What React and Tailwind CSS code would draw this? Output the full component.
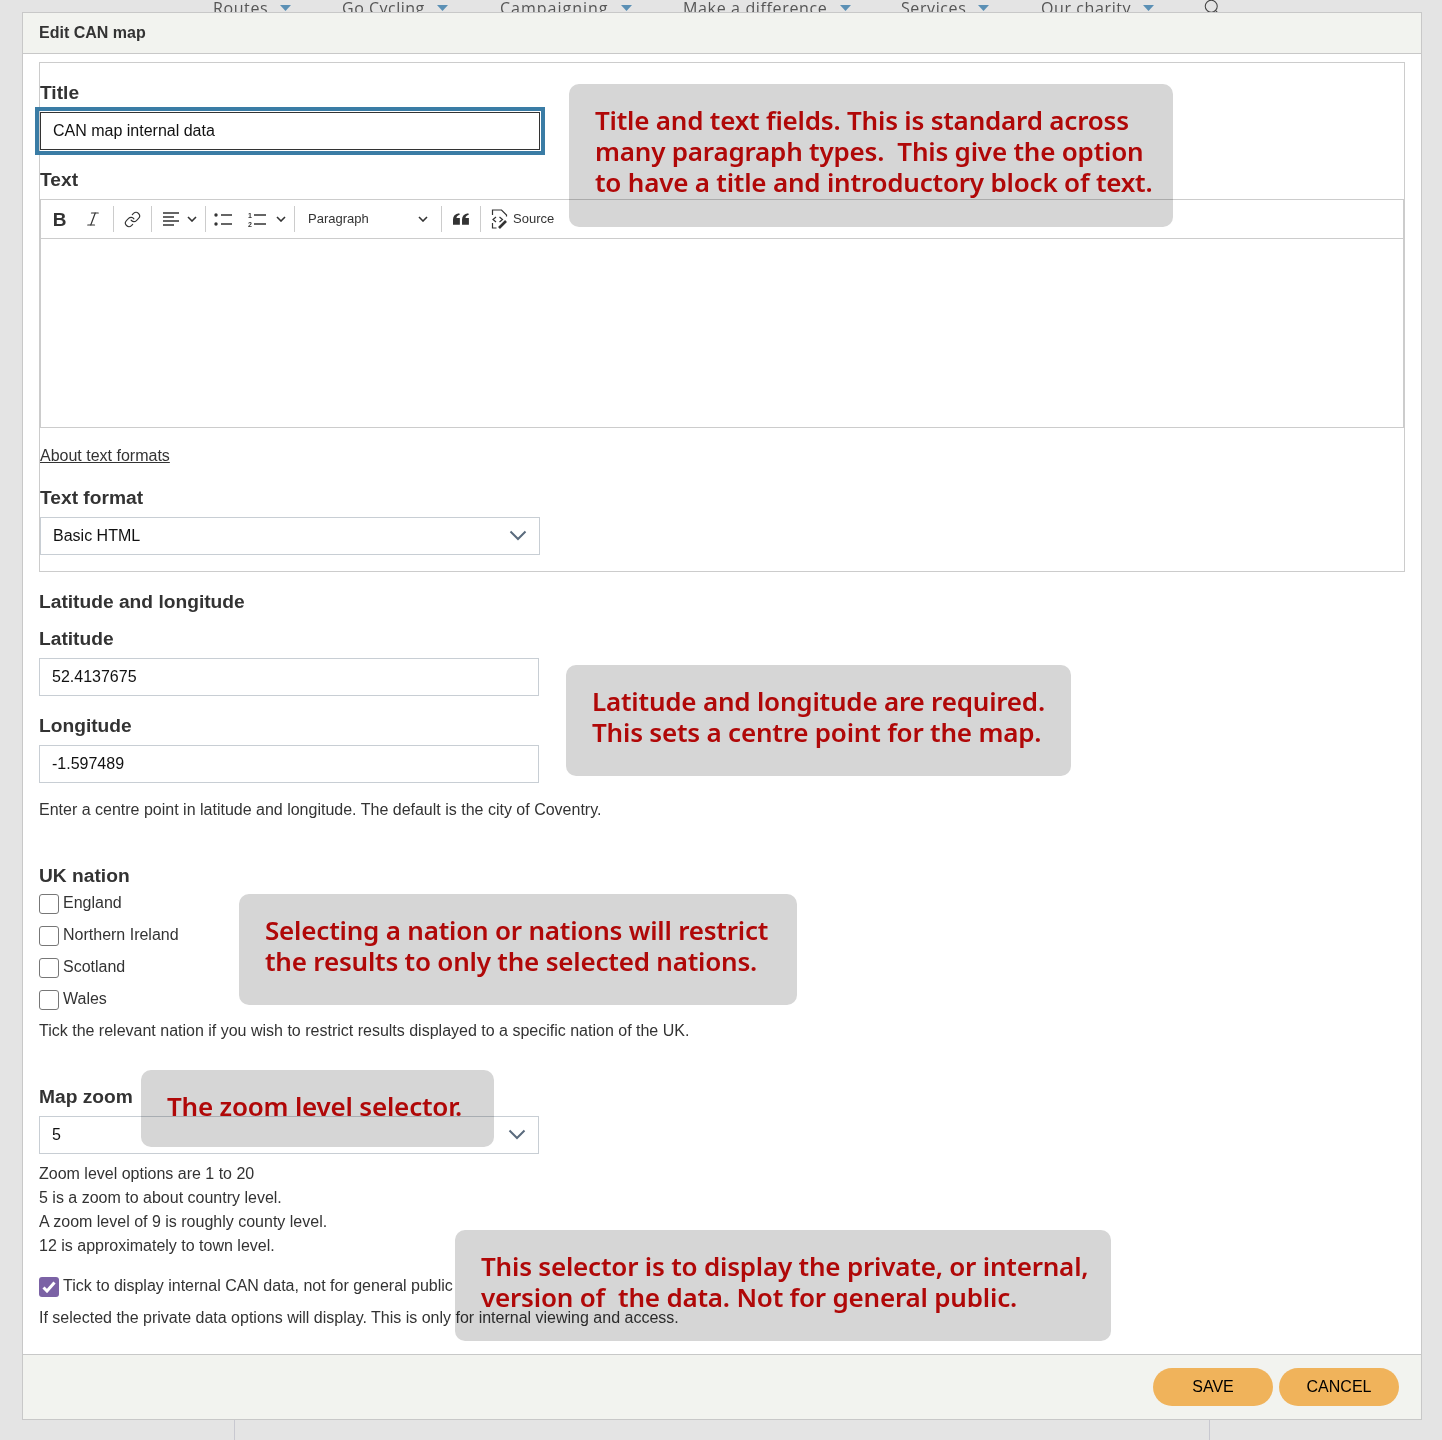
import React from "react";
import { Italic, Link, Search } from "lucide-react";

const navItems = [
  { label: "Routes", width: "w-[129px]", tracking: "tracking-[0.6px]" },
  { label: "Go Cycling", width: "w-[158px]", tracking: "tracking-[0.5px]" },
  { label: "Campaigning", width: "w-[183px]", tracking: "tracking-[1px]" },
  { label: "Make a difference", width: "w-[218px]", tracking: "tracking-[0.65px]" },
  { label: "Services", width: "w-[140px]", tracking: "tracking-[0.6px]" },
  { label: "Our charity", width: "w-[163px]", tracking: "tracking-[0.6px]" },
];

const labelClass = "block h-6 text-[19.2px] leading-[26px] font-bold text-[#333]";
const helpClass = "h-6 text-[16px] leading-[26px] text-[#333]";
const inputClass =
  "block w-[500px] h-[38px] border border-[#c8ced4] bg-white px-3 text-[16px] text-[#111] outline-none";

function Chevron() {
  return (
    <svg className="-mt-[2px]" width="18" height="11" viewBox="0 0 18 11" fill="none" stroke="#5a6b7d" strokeWidth="2">
      <path d="M1.5 1.5 9 9l7.5-7.5" />
    </svg>
  );
}

function SmallChevron() {
  return (
    <svg width="10" height="6" viewBox="0 0 10 6" fill="none" stroke="#333" strokeWidth="1.6">
      <path d="M1 1l4 4 4-4" />
    </svg>
  );
}

function Sep() {
  return <span className="w-px h-[26px] bg-[#ccc] shrink-0" />;
}

function SelectBox({ value }) {
  return (
    <div className="flex items-center justify-between w-[500px] h-[38px] border border-[#c8ced4] bg-white pl-3 pr-3 text-[16px] text-[#111]">
      <span>{value}</span>
      <Chevron />
    </div>
  );
}

function Nation({ label }) {
  return (
    <label className="flex items-start h-5 text-[16px] text-[#333]">
      <input type="checkbox" className="appearance-none w-5 h-5 rounded-[3px] border border-[#777] bg-white shrink-0" />
      <span className="ml-1 leading-[18px]">{label}</span>
    </label>
  );
}

function Toolbar() {
  return (
    <div className="flex items-center h-[39px] border-b border-[#ccc] pl-[2px] text-[#333]">
      <span className="flex justify-center w-[33px] text-[19px] font-bold leading-none text-[#333]">B</span>
      <span className="flex justify-center w-[33px]">
        <Italic size={18} strokeWidth={1.6} />
      </span>
      <span className="w-1" />
      <Sep />
      <span className="flex justify-center w-[37px]">
        <Link size={17} strokeWidth={1.6} />
      </span>
      <Sep />
      <span className="flex items-center w-[53px] pl-[11px] gap-2">
        <svg width="16" height="14" viewBox="0 0 16 14" stroke="#333" strokeWidth="1.4">
          <path d="M0 1h16M0 5h11M0 9h16M0 13h11" />
        </svg>
        <SmallChevron />
      </span>
      <Sep />
      <span className="flex justify-center w-[34px]">
        <svg width="18" height="13" viewBox="0 0 18 13" fill="#333" stroke="#333">
          <circle cx="2" cy="2" r="1.7" stroke="none" />
          <circle cx="2" cy="11" r="1.7" stroke="none" />
          <path d="M7 2h11M7 11h11" strokeWidth="1.5" />
        </svg>
      </span>
      <span className="flex items-center w-[54px] pl-2 gap-[10px]">
        <svg width="18" height="16" viewBox="0 0 18 16" fill="#333" stroke="#333">
          <text x="0" y="7" fontSize="7" fontWeight="700" stroke="none" fontFamily="Liberation Sans">1</text>
          <text x="0" y="15.5" fontSize="7" fontWeight="700" stroke="none" fontFamily="Liberation Sans">2</text>
          <path d="M6 4h12M6 13h12" strokeWidth="1.5" />
        </svg>
        <SmallChevron />
      </span>
      <Sep />
      <span className="flex items-center justify-between w-[146px] pl-[13px] pr-[13px] text-[13px]">
        Paragraph
        <SmallChevron />
      </span>
      <Sep />
      <span className="flex justify-center w-[38px]">
        <svg width="16" height="12" viewBox="0 0 17 12" fill="#333">
          <path d="M0 12V6.5C0 3 2.2.8 6.6 0l.6 1.6C5 2.3 3.900 3.300 3.700 5h3.600v7zM9.600 12V6.500c0-3.500 2.200-5.700 6.600-6.500l.6 1.600c-2.200.7-3.300 1.700-3.500 3.400h3.600v7z" />
        </svg>
      </span>
      <Sep />
      <span className="flex items-center pl-[10px] gap-1 text-[13px]">
        <svg width="18" height="20" viewBox="0 0 18 20" fill="none" stroke="#333" strokeWidth="1.2">
          <path d="M1.500 6V1h9l5 5v1.500M1.500 14v5h4" />
          <path d="M5 8 2 10.500l3 2.500M8.500 8l3 2.500-3 2.500" />
          <path d="M8 19l7-7" strokeWidth="2.600" />
        </svg>
        Source
      </span>
    </div>
  );
}

function Note({ className, children }) {
  return (
    <div
      className={`absolute rounded-[10px] bg-[#d6d6d6] mix-blend-multiply pt-[21px] pl-[26px] text-[26px] tracking-[-0.2px] leading-[31px] font-semibold text-[#b00808] whitespace-pre ${className}`}
      style={{ fontFamily: '"Noto Sans", sans-serif' }}
    >
      {children}
    </div>
  );
}

export default function App() {
  return (
    <div
      className="relative h-[1440px] overflow-hidden bg-[#e4e4e4]"
      style={{ fontFamily: '"Liberation Sans", Arial, sans-serif' }}
    >
      {/* page nav behind the dialog, clipped by it */}
      <div className="flex h-3 overflow-hidden pl-[213px]">
        {navItems.map((item) => (
          <div key={item.label} className={`flex items-center h-[22px] -mt-[3px] shrink-0 ${item.width}`}>
            <span className={`text-[16px] text-[#555] ${item.tracking}`} style={{ fontFamily: '"Open Sans", sans-serif' }}>
              {item.label}
            </span>
            <svg className="ml-3" width="11" height="6" viewBox="0 0 11 6" fill="#5b90b5">
              <path d="M0 0h11L5.500 6z" />
            </svg>
          </div>
        ))}
        <Search className="-mt-[2px] -ml-px" size={18} strokeWidth={1.4} color="#444" />
      </div>

      {/* dialog */}
      <div className="flex flex-col ml-[22px] w-[1400px] h-[1408px] border border-[#c8c8c8] bg-white">
        <div className="flex items-center h-[41px] shrink-0 border-b border-[#c8c8c8] bg-[#f2f3ef] pl-4 text-[16px] font-bold text-[#333]">
          Edit CAN map
        </div>

        <div className="flex-1 px-4 pt-2">
          <div className="border border-[#ccc] pt-[17px] pb-4">
            <span className={labelClass}>Title</span>
            <input
              defaultValue="CAN map internal data"
              className="block mt-2 w-[500px] h-[38px] border border-[#333] bg-white px-3 text-[16px] text-[#111] outline-4 outline-offset-1 outline-solid outline-[#3a7ca5]"
            />
            <span className={`${labelClass} mt-[17px]`}>Text</span>
            <div className="mt-2 h-[229px] border border-[#ccc]">
              <Toolbar />
            </div>
            <div className="mt-[15px] h-6 text-[16px] leading-[26px] text-[#333] underline">About text formats</div>
            <span className={`${labelClass} mt-[18px]`}>Text format</span>
            <div className="mt-2">
              <SelectBox value="Basic HTML" />
            </div>
          </div>

          <div className={`${labelClass} mt-[17px]`}>Latitude and longitude</div>
          <span className={`${labelClass} mt-[13px]`}>Latitude</span>
          <input defaultValue="52.4137675" className={`${inputClass} mt-2`} />
          <span className={`${labelClass} mt-[17px]`}>Longitude</span>
          <input defaultValue="-1.597489" className={`${inputClass} mt-2`} />
          <div className={`${helpClass} mt-[14px]`}>
            Enter a centre point in latitude and longitude. The default is the city of Coventry.
          </div>

          <div className={`${labelClass} mt-[42px]`}>UK nation</div>
          <div className="flex flex-col gap-3 mt-[7px]">
            <Nation label="England" />
            <Nation label="Northern Ireland" />
            <Nation label="Scotland" />
            <Nation label="Wales" />
          </div>
          <div className={`${helpClass} mt-2`}>
            Tick the relevant nation if you wish to restrict results displayed to a specific nation of the UK.
          </div>

          <div className={`${labelClass} mt-[42px]`}>Map zoom</div>
          <div className="mt-2">
            <SelectBox value="5" />
          </div>
          <div className={`${helpClass} mt-[7px]`}>Zoom level options are 1 to 20</div>
          <div className={helpClass}>5 is a zoom to about country level.</div>
          <div className={helpClass}>A zoom level of 9 is roughly county level.</div>
          <div className={helpClass}>12 is approximately to town level.</div>

          <label className="flex items-start h-5 mt-5 text-[16px] text-[#333]">
            <span className="flex items-center justify-center w-5 h-5 rounded-[3px] bg-[#7b62a5] shrink-0">
              <svg width="14" height="12" viewBox="0 0 14 12" fill="none" stroke="#fff" strokeWidth="3">
                <path d="M1.500 6.500 5 10l7.500-8.500" />
              </svg>
            </span>
            <span className="ml-1 leading-[18px]">Tick to display internal CAN data, not for general public</span>
          </label>
          <div className={`${helpClass} mt-2`}>
            If selected the private data options will display. This is only for internal viewing and access.
          </div>
        </div>

        <div className="flex justify-end items-start gap-[6px] h-[65px] shrink-0 border-t border-[#c8c8c8] bg-[#f2f3ef] pt-[13px] pr-[22px]">
          <button className="w-[120px] h-[38px] rounded-full bg-[#f0b35b] text-[16px] text-black">SAVE</button>
          <button className="w-[120px] h-[38px] rounded-full bg-[#f0b35b] text-[16px] text-black">CANCEL</button>
        </div>
      </div>

      <div className="ml-[234px] w-[976px] h-5 border-x border-[#c8c8d0]" />

      {/* review annotations laid over the form */}
      <Note className="left-[569px] top-[84px] w-[604px] h-[143px]">
        {"Title and text fields. This is standard across\nmany paragraph types.  This give the option\nto have a title and introductory block of text."}
      </Note>
      <Note className="left-[566px] top-[665px] w-[505px] h-[111px]">
        {"Latitude and longitude are required.\nThis sets a centre point for the map."}
      </Note>
      <Note className="left-[239px] top-[894px] w-[558px] h-[111px]">
        {"Selecting a nation or nations will restrict\nthe results to only the selected nations."}
      </Note>
      <Note className="left-[141px] top-[1070px] w-[353px] h-[77px]">The zoom level selector.</Note>
      <Note className="left-[455px] top-[1230px] w-[656px] h-[111px]">
        {"This selector is to display the private, or internal,\nversion of  the data. Not for general public."}
      </Note>
    </div>
  );
}
